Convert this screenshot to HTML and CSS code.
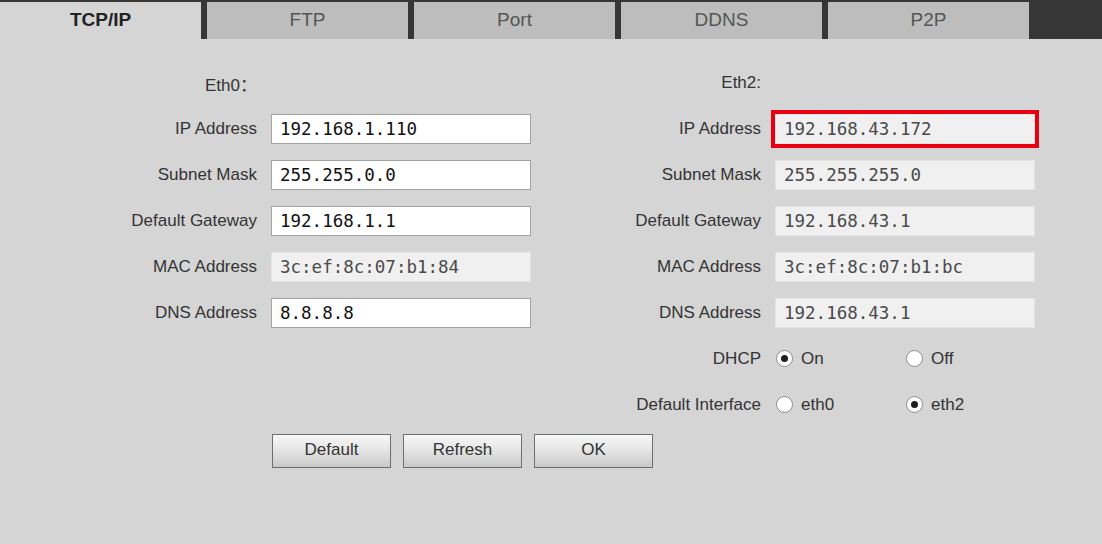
FILE: index.html
```html
<!DOCTYPE html>
<html>
<head>
<meta charset="utf-8">
<link rel="stylesheet" href="styles.css">
</head>
<body>
<div class="page">
  <nav class="tabs">
    <div class="tab active">TCP/IP</div>
    <div class="tab">FTP</div>
    <div class="tab">Port</div>
    <div class="tab">DDNS</div>
    <div class="tab">P2P</div>
  </nav>
  <div class="content">
    <div class="form">
      <div class="label head">Eth0：</div>
      <div></div>
      <div class="label head">Eth2:</div>
      <div></div>

      <div class="label">IP Address</div>
      <input class="field" type="text" value="192.168.1.110">
      <div class="label">IP Address</div>
      <input class="field disabled highlight" type="text" value="192.168.43.172" readonly>

      <div class="label">Subnet Mask</div>
      <input class="field" type="text" value="255.255.0.0">
      <div class="label">Subnet Mask</div>
      <input class="field disabled" type="text" value="255.255.255.0" readonly>

      <div class="label">Default Gateway</div>
      <input class="field" type="text" value="192.168.1.1">
      <div class="label">Default Gateway</div>
      <input class="field disabled" type="text" value="192.168.43.1" readonly>

      <div class="label">MAC Address</div>
      <input class="field disabled" type="text" value="3c:ef:8c:07:b1:84" readonly>
      <div class="label">MAC Address</div>
      <input class="field disabled" type="text" value="3c:ef:8c:07:b1:bc" readonly>

      <div class="label">DNS Address</div>
      <input class="field" type="text" value="8.8.8.8">
      <div class="label">DNS Address</div>
      <input class="field disabled" type="text" value="192.168.43.1" readonly>

      <div></div><div></div>
      <div class="label">DHCP</div>
      <div class="radios">
        <span class="opt"><span class="radio checked"></span>On</span>
        <span class="opt"><span class="radio"></span>Off</span>
      </div>

      <div></div><div></div>
      <div class="label">Default Interface</div>
      <div class="radios">
        <span class="opt"><span class="radio"></span>eth0</span>
        <span class="opt"><span class="radio checked"></span>eth2</span>
      </div>
    </div>
    <div class="buttons">
      <button class="btn">Default</button>
      <button class="btn">Refresh</button>
      <button class="btn">OK</button>
    </div>
  </div>
</div>
</body>
</html>
```

FILE: styles.css
```css
html, body {
  margin: 0;
  padding: 0;
}
body {
  width: 1102px;
  height: 544px;
  background: #d5d5d5;
  font-family: "Liberation Sans", Arial, "Noto Sans CJK SC", sans-serif;
  overflow: hidden;
}
.page {
  width: 1102px;
  height: 544px;
  background: #d5d5d5;
}
.tabs {
  display: flex;
  gap: 6px;
  height: 39px;
  padding-top: 2px;
  box-sizing: border-box;
  background: #363636;
}
.tab {
  width: 201px;
  height: 37px;
  background: #bdbdbd;
  color: #555;
  font-size: 19px;
  display: flex;
  align-items: center;
  justify-content: center;
  padding-bottom: 2px;
  box-sizing: border-box;
}
.tab.active {
  background: #d5d5d5;
  color: #222;
  font-weight: bold;
}
.content {
  padding-top: 29px;
}
.form {
  display: grid;
  grid-template-columns: 257px 260px 216px 260px;
  grid-auto-rows: 30px;
  column-gap: 14px;
  row-gap: 16px;
}
.label {
  display: flex;
  align-items: center;
  justify-content: flex-end;
  font-size: 17px;
  color: #333;
  white-space: nowrap;
}
.field {
  width: 260px;
  height: 30px;
  box-sizing: border-box;
  margin: 0;
  border: 1px solid #a3a3a3;
  background: #fff;
  padding: 0 0 0 8px;
  font-family: "DejaVu Sans Mono", monospace;
  font-size: 17.5px;
  color: #111;
  outline: none;
}
.field.disabled {
  background: #f0f0f0;
  border-color: #e4e4e4;
  color: #4a4a4a;
}
.field.highlight {
  outline: 4px solid #e60012;
  outline-offset: 0;
}
.radios {
  display: flex;
  align-items: center;
}
.opt {
  display: flex;
  align-items: center;
  width: 152px;
  font-size: 17px;
  color: #333;
  padding-bottom: 1px;
}
.radio {
  width: 17px;
  height: 17px;
  box-sizing: border-box;
  border: 1px solid #8c8c8c;
  border-radius: 50%;
  background: #fff;
  margin-left: 1px;
  margin-right: 8px;
  position: relative;
  flex: none;
}
.radio.checked::after {
  content: "";
  position: absolute;
  left: 4px;
  top: 4px;
  width: 7px;
  height: 7px;
  border-radius: 50%;
  background: #1e1e1e;
}
.buttons {
  display: flex;
  gap: 12px;
  margin-top: 14px;
  padding-left: 272px;
}
.btn {
  width: 119px;
  height: 34px;
  margin: 0;
  border: 1px solid #6e6e6e;
  background: linear-gradient(#f7f7f7, #e6e6e6 45%, #c9c9c9);
  font-family: "Liberation Sans", Arial, sans-serif;
  font-size: 17px;
  color: #333;
  padding: 0 0 2px 0;
}
```
